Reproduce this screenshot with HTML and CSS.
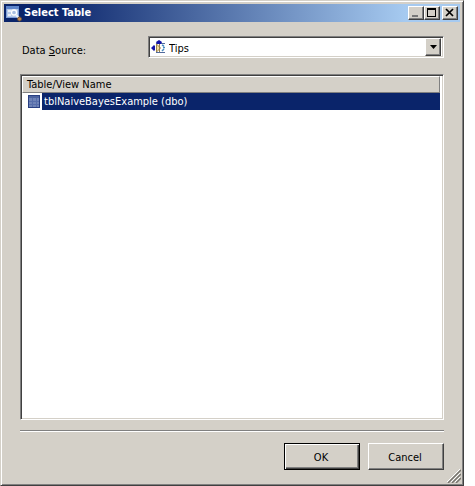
FILE: index.html
```html
<!DOCTYPE html>
<html lang="en">
<head>
<meta charset="utf-8">
<title>Select Table</title>
<link rel="stylesheet" href="styles.css">
</head>
<body>
<form class="window">
  <header class="titlebar">
    <svg class="app-icon" width="16" height="17" viewBox="0 0 16 17" aria-hidden="true">
      <path fill="#7f9fd8" d="M0 1h13v12H0z"/>
      <path fill="#5f86cc" d="M0 1h13v3H0z"/>
      <path fill="#b9cbe9" d="M1 4h11v8H1z"/>
      <path fill="#e8eef8" d="M2 5h3v2H2zM2 9h3v2H2z"/>
      <circle cx="8" cy="7.500" r="2.500" fill="#a9bfe2" stroke="#fff" stroke-width="1.300"/>
      <path stroke="#eef3fb" stroke-width="2" d="M10 10l3 3"/>
      <circle cx="13.500" cy="14" r="2" fill="#c98a4c" stroke="#68513c"/>
    </svg>
    <h1 class="title">Select Table</h1>
    <div class="captions">
      <button class="caption" type="button" aria-label="Minimize"><svg width="12" height="10" viewBox="0 0 12 10"><path fill="#777" d="M2 7h6v2H2z"/></svg></button>
      <button class="caption" type="button" aria-label="Maximize"><svg width="12" height="10" viewBox="0 0 12 10"><path fill="#000" fill-rule="evenodd" d="M1 0h9v9H1zM2 2v6h7V2z"/></svg></button>
      <button class="caption close" type="button" aria-label="Close"><svg width="12" height="10" viewBox="0 0 12 10"><path stroke="#000" stroke-width="1.700" d="M2 1l7 7M9 1L2 8"/></svg></button>
    </div>
  </header>
  <main class="content">
    <div class="field">
      <label for="source">Data <u>S</u>ource:</label>
      <div class="combo">
        <select id="source"><option>Tips</option></select>
        <svg class="source-icon" width="16" height="16" viewBox="0 0 16 16" aria-hidden="true">
          <path fill="none" stroke="#526a9c" d="M5 4.500h9M5 13.500h9"/>
          <path fill="#f5dda0" stroke="#9c8249" d="M5.500 5l4 4-4 4zM8.500 5v8"/>
          <path stroke="#4d8ec1" stroke-width="1.500" d="M11 6l2 1M11 12l2-2M12 8.500h2"/>
          <path fill="#1515a8" d="M8 1l3 2-1 2H6L5 3zM0 9l3-3 1 1v4l-1 1z"/>
        </svg>
        <span class="arrow"><svg width="7" height="4" viewBox="0 0 7 4"><path d="M0 0h7L3.500 4z"/></svg></span>
      </div>
    </div>
    <div class="list">
      <table>
        <thead><tr><th scope="col">Table/View Name</th></tr></thead>
        <tbody><tr><td><div class="row">
          <svg width="14" height="14" viewBox="0 0 14 14" aria-hidden="true">
            <path fill="#283f83" d="M1 0h12v13H1z"/>
            <path fill="#6e83b7" d="M2 1h10v11H2z"/>
            <path fill="#4b629f" d="M2 1h10v2H2z"/>
            <path stroke="#566dab" d="M2 6.500h10M2 9.500h10M5.500 3v9M9.500 3v9"/>
          </svg>
          <span class="name">tblNaiveBayesExample (dbo)</span>
        </div></td></tr></tbody>
      </table>
    </div>
    <hr>
    <div class="actions">
      <button class="action default" type="button">OK</button>
      <button class="action" type="button">Cancel</button>
    </div>
  </main>
  <svg class="grip" width="14" height="14" viewBox="0 0 14 14" aria-hidden="true">
    <path stroke="#fff" d="M0 13L13 0M4 13l9-9M8 13l5-5"/>
    <path stroke="#77756f" stroke-width="1.500" d="M1 14L14 1M5 14l9-9M9 14l5-5"/>
  </svg>
</form>
</body>
</html>
```
FILE: styles.css
```css
* { box-sizing: border-box; }
body {
  margin: 0;
  padding-right: 11px;
  background: #fff;
  color: #000;
  font: 11px/14px "DejaVu Sans Condensed", sans-serif;
}
svg { display: block; }
button, select { font: inherit; color: inherit; border-radius: 0; }
.window {
  position: relative;
  display: flex;
  flex-direction: column;
  min-height: 100vh;
  padding: 2px;
  background: #d4d0c8;
  border: 1px solid;
  border-color: #d4d0c8 #404040 #404040 #d4d0c8;
  box-shadow: inset 1px 1px #fff, inset -1px -1px #808080;
}
.titlebar {
  display: flex;
  align-items: center;
  height: 18px;
  margin: 1px 1px 0;
  padding: 0 2px;
  background: linear-gradient(90deg, #0a246a 10%, #a6caf0 88%);
  color: #fff;
}
.title { flex: 1; margin: 0 0 0 2px; font-size: 11px; line-height: 16px; font-weight: bold; }
.captions { display: flex; }
.caption {
  display: grid;
  place-items: center;
  width: 16px;
  height: 14px;
  padding: 0;
}
.close { margin-left: 2px; }
.caption, .action, .arrow {
  background: #d4d0c8;
  border: 1px solid;
  border-color: #fff #404040 #404040 #fff;
  box-shadow: inset -1px -1px #808080;
}
.content { flex: 1; display: flex; flex-direction: column; padding: 14px 17px 13px 17px; }
.field { display: flex; align-items: center; margin-bottom: 16px; }
.field label { width: 128px; padding: 8px 0 0 2px; }
.combo { position: relative; flex: 1; }
.combo, .list {
  background: #fff;
  border: 1px solid;
  border-color: #808080 #fff #fff #808080;
  box-shadow: inset 1px 1px #404040, inset -1px -1px #d4d0c8;
}
.combo select {
  display: block;
  width: 100%;
  height: 20px;
  padding: 3px 20px 0 20px;
  appearance: none;
  background: transparent;
  border: 0;
}
.source-icon { position: absolute; left: 2px; top: 2px; }
.arrow {
  position: absolute;
  top: 1px;
  right: 2px;
  bottom: 1px;
  width: 16px;
  display: grid;
  place-items: center;
  pointer-events: none;
}
.list { flex: 1; padding: 1px 3px 1px 1px; }
table { width: 100%; border-collapse: separate; border-spacing: 0; }
th {
  height: 16px;
  padding: 1px 4px 0;
  background: #d4d0c8;
  border: 1px solid;
  border-color: #fff #808080 #808080 #fff;
  font-weight: normal;
  text-align: left;
}
td { padding: 0 0 0 5px; }
.row { display: flex; align-items: center; gap: 1px; }
.name { flex: 1; padding: 2px 2px 1px; background: #0a246a; color: #fff; }
hr {
  width: 100%;
  height: 2px;
  margin: 10px 0 11px;
  border: 0;
  border-top: 1px solid #808080;
  border-bottom: 1px solid #fff;
}
.actions { display: flex; justify-content: flex-end; gap: 8px; }
.action { width: 76px; height: 27px; padding: 2px 2px 0 0; }
.default { border-color: #000; box-shadow: inset 1px 1px #fff, inset -1px -1px #404040, inset -2px -2px #808080; }
.grip { position: absolute; right: 2px; bottom: 2px; }
```
